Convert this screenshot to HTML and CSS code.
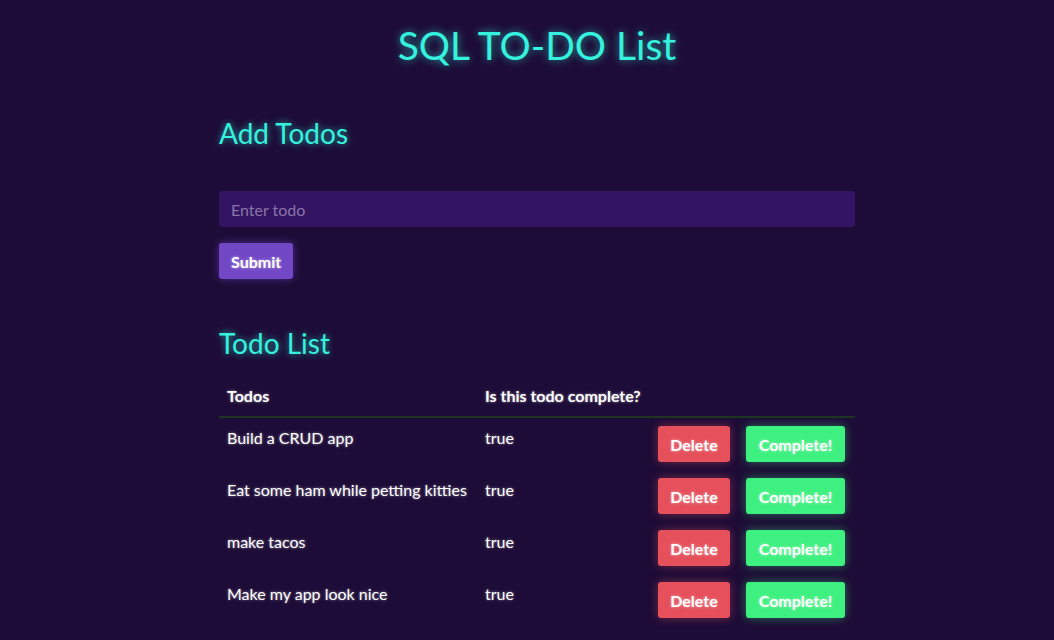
FILE: index.html
```html
<!DOCTYPE html>
<html lang="en">
<head>
<meta charset="utf-8">
<title>SQL TO-DO List</title>
<link rel="stylesheet" href="styles.css">
</head>
<body>
<div class="page">
  <h1 class="title">SQL TO-DO List</h1>
  <main class="container">
    <h2 class="section-title add-title">Add Todos</h2>
    <form class="todo-form">
      <input class="todo-input" type="text" placeholder="Enter todo">
      <button class="btn btn-submit" type="button">Submit</button>
    </form>
    <h2 class="section-title list-title">Todo List</h2>
    <table class="todo-table">
      <thead>
        <tr>
          <th class="col-todo">Todos</th>
          <th class="col-status">Is this todo complete?</th>
          <th class="col-actions"></th>
        </tr>
      </thead>
      <tbody>
        <tr>
          <td>Build a CRUD app</td>
          <td>true</td>
          <td class="actions"><div class="action-group"><button class="btn btn-delete">Delete</button><button class="btn btn-complete">Complete!</button></div></td>
        </tr>
        <tr>
          <td>Eat some ham while petting kitties</td>
          <td>true</td>
          <td class="actions"><div class="action-group"><button class="btn btn-delete">Delete</button><button class="btn btn-complete">Complete!</button></div></td>
        </tr>
        <tr>
          <td>make tacos</td>
          <td>true</td>
          <td class="actions"><div class="action-group"><button class="btn btn-delete">Delete</button><button class="btn btn-complete">Complete!</button></div></td>
        </tr>
        <tr>
          <td>Make my app look nice</td>
          <td>true</td>
          <td class="actions"><div class="action-group"><button class="btn btn-delete">Delete</button><button class="btn btn-complete">Complete!</button></div></td>
        </tr>
      </tbody>
    </table>
  </main>
</div>
</body>
</html>
```

FILE: styles.css
```css
html, body {
  margin: 0;
  padding: 0;
}

body {
  background: #1d0c37;
  color: #ffffff;
  font-family: Lato, "Open Sans", sans-serif;
  overflow: hidden;
}

.page {
  padding-left: 20px;
  height: 640px;
  box-sizing: border-box;
}

.title {
  margin: 0;
  padding-top: 21px;
  text-align: center;
  font-size: 39px;
  line-height: 48px;
  font-weight: 400;
  color: #34f2dd;
  text-shadow: 0 0 8px rgba(52, 242, 221, 0.65);
}

.container {
  width: 636px;
  margin: 0 auto;
}

.section-title {
  margin: 0;
  font-size: 28px;
  line-height: 34px;
  font-weight: 400;
  color: #34f2dd;
  text-shadow: 0 0 7px rgba(52, 242, 221, 0.65);
}

.add-title {
  margin-top: 47px;
}

.todo-form {
  margin-top: 41px;
  display: flex;
  flex-direction: column;
  align-items: flex-start;
  gap: 16px;
}

.todo-input {
  width: 100%;
  height: 36px;
  box-sizing: border-box;
  border: none;
  border-radius: 3px;
  background: #321462;
  padding: 0 12px;
  font-family: Lato, sans-serif;
  font-size: 16px;
  color: #fff;
  outline: none;
}

.todo-input::placeholder {
  color: #8a75a9;
}

.btn {
  font-family: Lato, sans-serif;
  font-weight: 700;
  font-size: 16px;
  color: #fff;
  border: none;
  border-radius: 3px;
  height: 36px;
  padding: 0 12px;
  cursor: pointer;
  text-shadow: 0 0 3px rgba(255, 255, 255, 0.55);
}

.btn-submit {
  background: #7147c6;
  box-shadow: 0 0 8px rgba(113, 71, 198, 0.6);
}

.list-title {
  margin-top: 47px;
}

.todo-table {
  margin-top: 16px;
  width: 100%;
  border-collapse: collapse;
}

.todo-table th,
.todo-table td {
  padding: 8px;
  text-align: left;
  vertical-align: top;
  font-size: 16px;
  line-height: 24px;
  text-shadow: 0 0 3px rgba(255, 255, 255, 0.5);
}

.todo-table th {
  font-weight: 700;
  border-bottom: 2px solid #1f3524;
}

.col-todo {
  width: 242px;
}

.todo-table td.actions {
  padding-right: 10px;
}

.action-group {
  display: flex;
  justify-content: flex-end;
  gap: 16px;
}

.btn-delete {
  width: 72px;
  padding: 0;
  background: #e5505b;
  box-shadow: 0 0 10px rgba(229, 80, 91, 0.45);
}

.btn-complete {
  width: 99px;
  padding: 0;
  background: #3ef07f;
  box-shadow: 0 0 10px rgba(62, 240, 127, 0.45);
}
```
